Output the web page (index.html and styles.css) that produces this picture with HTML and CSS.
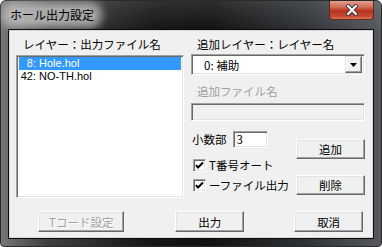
FILE: index.html
```html
<!DOCTYPE html>
<html lang="ja">
<head>
    <meta charset="UTF-8">
    <title>ホール出力設定</title>
    <link rel="stylesheet" href="styles.css">
</head>
<body>
    <div class="window">
        <div class="titlebar">
            <span class="title">ホール出力設定</span>
            <div class="close">
                <svg width="16" height="12" viewBox="0 0 16 12">
                    <path d="M4 2 L12 10 M12 2 L4 10" stroke="#3a3a3a" stroke-width="4" stroke-linecap="round"/>
                    <path d="M4 2 L12 10 M12 2 L4 10" stroke="#fff" stroke-width="2.2" stroke-linecap="round"/>
                </svg>
            </div>
        </div>

        <div class="client">
            <div class="main">
                <div class="col-left">
                    <div class="label">レイヤー：出力ファイル名</div>
                    <div class="listbox sunken">
                        <div class="item selected"><span class="num">8:</span> Hole.hol</div>
                        <div class="item"><span class="num">42:</span> NO-TH.hol</div>
                    </div>
                </div>

                <div class="col-right">
                    <div class="label">追加レイヤー：レイヤー名</div>
                    <div class="combo sunken">
                        <span class="combo-text">0: 補助</span>
                        <span class="drop">
                            <svg width="7" height="4" viewBox="0 0 7 4"><path d="M0 0 H7 L3.5 4 Z" fill="#000"/></svg>
                        </span>
                    </div>
                    <div class="label2 disabled">追加ファイル名</div>
                    <div class="textbox sunken is-disabled"></div>

                    <div class="options">
                        <div class="opt-left">
                            <div class="decimal">
                                <span>小数部</span>
                                <span class="small-box sunken">3</span>
                            </div>
                            <div class="check">
                                <span class="box sunken">
                                    <svg width="9" height="9" viewBox="0 0 9 9"><path d="M1 4 L3 6.5 L8 1.5" stroke="#000" stroke-width="2" fill="none"/></svg>
                                </span>
                                T番号オート
                            </div>
                            <div class="check">
                                <span class="box sunken">
                                    <svg width="9" height="9" viewBox="0 0 9 9"><path d="M1 4 L3 6.5 L8 1.5" stroke="#000" stroke-width="2" fill="none"/></svg>
                                </span>
                                ーファイル出力
                            </div>
                        </div>
                        <div class="opt-right">
                            <div class="btn side">追加</div>
                            <div class="btn side">削除</div>
                        </div>
                    </div>
                </div>
            </div>

            <div class="footer">
                <div class="btn wide disabled-btn">Tコード設定</div>
                <div class="btn default">出力</div>
                <div class="btn">取消</div>
            </div>
        </div>
    </div>
</body>
</html>
```

FILE: styles.css
```css
body {
    margin: 0;
    background: #fff;
    font-family: "Noto Sans CJK JP", "Liberation Sans", sans-serif;
    font-size: 11.5px;
    color: #000;
}
.window {
    width: 382px;
    height: 247px;
    box-sizing: border-box;
    padding: 0 8px 8px;
    border: 1px solid #2a2a2a;
    border-radius: 6px 6px 4px 4px;
    background:
        linear-gradient(180deg, rgba(255,255,255,0.12) 0, rgba(255,255,255,0) 30px),
        linear-gradient(90deg, #767676 0, #404040 12%, #151515 40%, #111 55%, #2e3236 80%, #55595e 100%);
    display: flex;
    flex-direction: column;
}
.titlebar {
    height: 29px;
    display: flex;
    justify-content: space-between;
    align-items: flex-start;
}
.title {
    margin: 7px 0 0 -1px;
    padding: 0 2px;
    font-size: 12px;
    line-height: 14px;
    color: #000;
    background: rgba(200, 200, 200, 0.75);
    box-shadow: 0 0 8px 6px rgba(200, 200, 200, 0.75);
    border-radius: 6px;
}
.close {
    width: 43px;
    height: 18px;
    margin-right: -1px;
    border: 1px solid #5a2a22;
    border-top: none;
    border-radius: 0 0 4px 4px;
    background: linear-gradient(180deg, #e0a090 0, #d06a52 35%, #b8321c 55%, #c44a30 85%, #e0785a 100%);
    display: flex;
    align-items: center;
    justify-content: center;
}
.client {
    flex: 1;
    background: #f0f0f0;
    border: 1px solid #d8d8d8;
    box-shadow: 0 0 0 1px #0c0c0c;
    padding: 4px 9px 0 6px;
}
.main {
    display: grid;
    grid-template-columns: 168px 174px;
    column-gap: 7px;
}
.label {
    height: 20px;
    line-height: 18px;
    padding-left: 7px;
    white-space: nowrap;
}
.col-right .label {
    padding-left: 6px;
    margin-bottom: -1px;
}
.sunken {
    box-sizing: border-box;
    border-style: solid;
    border-width: 1px;
    border-color: #a0a0a0 #fff #fff #a0a0a0;
    box-shadow: inset 1px 1px #696969, inset -1px -1px #e3e3e3;
}
.listbox {
    height: 143px;
    background: #fff;
    padding: 1px 2px;
    font-family: "Liberation Sans", sans-serif;
    font-size: 11px;
}
.item {
    height: 13px;
    line-height: 13px;
    white-space: nowrap;
}
.item.selected {
    background: #3399ff;
    color: #fff;
}
.num {
    display: inline-block;
    width: 17px;
    text-align: right;
}
.combo {
    height: 21px;
    background: #fff;
    display: flex;
    align-items: center;
    justify-content: space-between;
    padding: 2px;
}
.combo-text {
    padding-left: 10px;
}
.drop {
    box-sizing: border-box;
    width: 17px;
    height: 17px;
    background: #f0f0f0;
    border: 1px solid;
    border-color: #e3e3e3 #696969 #696969 #e3e3e3;
    box-shadow: inset -1px -1px #a0a0a0, inset 1px 1px #fff;
    display: flex;
    align-items: center;
    justify-content: center;
}
.label2 {
    margin-top: 9px;
    padding-left: 6px;
    line-height: 14px;
    height: 14px;
    margin-bottom: 5px;
}
.disabled {
    color: #a0a0a0;
}
.textbox {
    height: 18px;
}
.is-disabled {
    background: #f0f0f0;
}
.options {
    margin-top: 10px;
    display: grid;
    grid-template-columns: 105px 69px;
}
.decimal {
    height: 16px;
    display: flex;
    align-items: center;
    padding-left: 1px;
}
.small-box {
    margin-left: 6px;
    width: 35px;
    height: 17px;
    background: #fff;
    line-height: 15px;
    padding-left: 3px;
}
.check {
    display: flex;
    align-items: center;
    height: 14px;
    margin-top: 6px;
    padding-left: 2px;
    white-space: nowrap;
}
.decimal + .check {
    margin-top: 11px;
}
.box {
    width: 13px;
    height: 13px;
    background: #fff;
    margin-right: 3px;
    display: flex;
    align-items: center;
    justify-content: center;
}
.opt-right {
    padding-top: 8px;
    display: flex;
    flex-direction: column;
    gap: 16px;
}
.btn {
    box-sizing: border-box;
    width: 70px;
    height: 21px;
    background: #f0f0f0;
    border: 1px solid;
    border-color: #fff #696969 #696969 #fff;
    box-shadow: inset -1px -1px #a0a0a0, inset 1px 1px #e3e3e3;
    display: flex;
    align-items: center;
    justify-content: center;
}
.btn.side {
    width: 69px;
    height: 20px;
}
.footer {
    display: flex;
    margin-top: 13px;
    padding-left: 22px;
}
.wide {
    width: 88px;
    margin-right: 51px;
}
.disabled-btn {
    color: #a0a0a0;
    text-shadow: 1px 1px #fff;
}
.default {
    margin-right: 50px;
}
```
